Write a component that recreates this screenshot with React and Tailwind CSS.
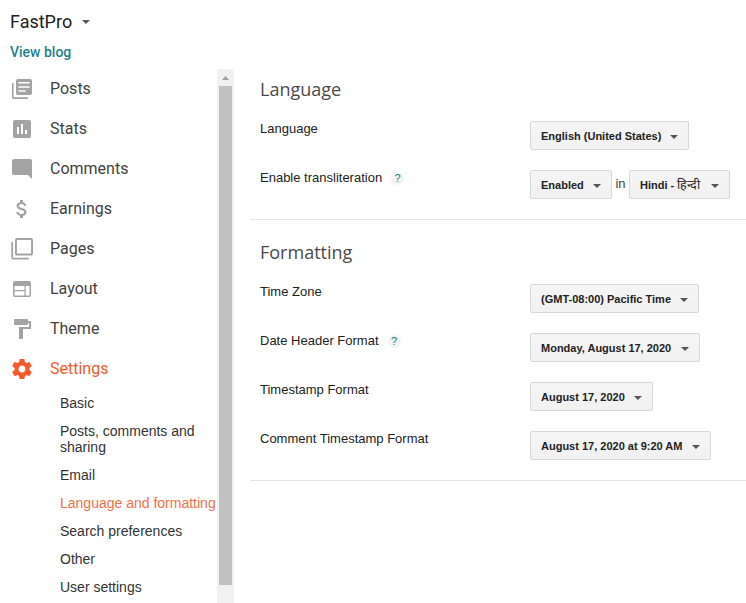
import React from "react";

function Icon({ children, active }) {
  return (
    <svg
      width="24"
      height="24"
      viewBox="0 0 24 24"
      className={active ? "shrink-0 fill-[#f4592a]" : "shrink-0 fill-[#a3a3a3]"}
    >
      {children}
    </svg>
  );
}

const icons = {
  posts: (
    <>
      <path d="M2 6h1.6v14.2H18V22H3.5Q2 22 2 20.5Z" />
      <path
        fillRule="evenodd"
        d="M8 2h12q2 0 2 2v12q0 2-2 2H8q-2 0-2-2V4q0-2 2-2ZM8.3 5v1.5h11.4V5ZM8.3 9.2v1.5h11.4V9.2ZM8.3 13.2v1.5h7.4v-1.5Z"
      />
    </>
  ),
  stats: (
    <path
      fillRule="evenodd"
      d="M5 3h14q2 0 2 2v14q0 2-2 2H5q-2 0-2-2V5q0-2 2-2ZM7 10v7h2v-7ZM11 7v10h2V7ZM15 13v4h2v-4Z"
    />
  ),
  comments: <path d="M4 2h16q2 0 2 2v18l-4-4H4q-2 0-2-2V4q0-2 2-2Z" />,
  earnings: (
    <path d="M11.8 10.9c-2.27-.59-3-1.2-3-2.15 0-1.09 1.01-1.85 2.7-1.85 1.78 0 2.44.85 2.5 2.1h2.21c-.07-1.72-1.12-3.3-3.21-3.81V3h-3v2.16c-1.94.42-3.5 1.68-3.5 3.61 0 2.31 1.91 3.46 4.7 4.13 2.5.6 3 1.48 3 2.41 0 .69-.49 1.79-2.7 1.79-2.06 0-2.87-.92-2.98-2.1h-2.2c.12 2.19 1.76 3.42 3.68 3.83V21h3v-2.15c1.95-.37 3.5-1.5 3.5-3.55 0-2.84-2.43-3.81-4.7-4.4z" />
  ),
  pages: (
    <>
      <path d="M1.3 5H3v15.7h15.8v1.9H2.8q-1.5 0-1.5-1.5Z" />
      <path
        fillRule="evenodd"
        d="M7 1h14q2 0 2 2v13.500q0 2-2 2H7q-2 0-2-2V3q0-2 2-2ZM6.900 2.900v13.700h14.200V2.900Z"
      />
    </>
  ),
  layout: (
    <path
      fillRule="evenodd"
      d="M5 4h14q2 0 2 2v12q0 2-2 2H5q-2 0-2-2V6q0-2 2-2ZM4.500 9v4h10V9ZM4.500 14.200v4.300h10v-4.300ZM15.700 9v9.500h3.800V9Z"
    />
  ),
  theme: (
    <path d="M18 4V3c0-.55-.45-1-1-1H5c-.55 0-1 .45-1 1v4c0 .55.45 1 1 1h12c.55 0 1-.45 1-1V6h1v4H9v11c0 .55.45 1 1 1h2c.55 0 1-.45 1-1v-9h8V4h-3z" />
  ),
  settings: (
    <path d="M19.430 12.980c.040-.320.070-.640.070-.980s-.030-.660-.070-.980l2.110-1.650c.190-.150.240-.420.120-.640l-2-3.460c-.120-.220-.390-.300-.610-.220l-2.490 1c-.520-.400-1.080-.730-1.690-.980l-.380-2.650C14.460 2.180 14.250 2 14 2h-4c-.250 0-.460.180-.490.420l-.380 2.650c-.610.250-1.170.590-1.690.980l-2.490-1c-.230-.090-.490 0-.610.220l-2 3.460c-.130.220-.070.490.120.640l2.110 1.650c-.040.320-.070.650-.070.980s.030.660.070.980l-2.110 1.650c-.190.150-.240.420-.120.640l2 3.460c.120.220.390.300.610.220l2.490-1c.520.400 1.080.730 1.690.980l.380 2.650c.030.240.240.420.490.420h4c.250 0 .460-.180.490-.420l.380-2.650c.610-.250 1.170-.590 1.690-.980l2.490 1c.230.090.490 0 .610-.220l2-3.460c.120-.220.070-.490-.120-.640l-2.110-1.650zM12 15.500c-1.930 0-3.500-1.570-3.500-3.500s1.570-3.500 3.500-3.500 3.500 1.570 3.500 3.500-1.570 3.500-3.500 3.500z" />
  ),
};

const nav = [
  ["posts", "Posts"],
  ["stats", "Stats"],
  ["comments", "Comments"],
  ["earnings", "Earnings"],
  ["pages", "Pages"],
  ["layout", "Layout"],
  ["theme", "Theme"],
  ["settings", "Settings"],
];

const subnav = [
  "Basic",
  "Posts, comments and sharing",
  "Email",
  "Language and formatting",
  "Search preferences",
  "Other",
  "User settings",
];

function Caret() {
  return (
    <svg width="8" height="4" viewBox="0 0 8 4" className="shrink-0 fill-[#555]">
      <path d="M0 0h8L4 4Z" />
    </svg>
  );
}

function Select({ children, width }) {
  return (
    <button
      className={`${width} flex h-[29px] shrink-0 items-center justify-between rounded-[2px] border border-[#d8d8d8] bg-linear-to-b from-[#f5f5f5] to-[#f1f1f1] px-[10px] text-[11px] leading-[16px] font-bold whitespace-nowrap text-[#222]`}
    >
      <span className="h-[17px] pt-px">{children}</span>
      <span className="flex pt-[3px]">
        <Caret />
      </span>
    </button>
  );
}

function Row({ label, help, children }) {
  return (
    <div className="flex h-[49px] items-start pl-[10px]">
      <div className="flex w-[270px] shrink-0 items-center text-[13px] leading-[16px] text-[#222]">
        {label}
        {help && (
          <span className="ml-[9px] flex h-[13px] w-[13px] items-center justify-center rounded-full bg-[#f3f3f3] text-[11px] leading-none text-[#1a7f8e]">
            ?
          </span>
        )}
      </div>
      {children}
    </div>
  );
}

function Title({ children }) {
  return (
    <h2 className="h-[45px] pl-[10px] font-['Open_Sans',sans-serif] text-[18px] leading-[26px] font-normal text-[#4a4a4a]">
      {children}
    </h2>
  );
}

export default function App() {
  return (
    <div className="flex h-[603px] w-[746px] flex-col overflow-hidden bg-white font-['Liberation_Sans',Arial,sans-serif]">
      <header className="h-[69px] shrink-0 pl-[10px] font-['Roboto',sans-serif]">
        <div className="flex items-center pt-[10px] text-[18px] leading-[24px] text-[#212121]">
          <span className="w-[71.5px] whitespace-nowrap">FastPro</span>
          <Caret />
        </div>
        <a className="block pt-[9px] text-[14px] leading-[18px] font-medium text-[#1f7f8f]">View blog</a>
      </header>

      <div className="flex min-h-0 flex-1">
        <nav className="w-[217px] shrink-0 overflow-hidden">
          <ul className="font-['Roboto',sans-serif]">
            {nav.map(([key, label]) => (
              <li key={key} className="flex h-[40px] items-center pl-[10px]">
                <Icon active={key === "settings"}>{icons[key]}</Icon>
                <span
                  className={
                    key === "settings"
                      ? "pl-[16px] text-[16px] leading-[20px] text-[#f4592a]"
                      : "pl-[16px] text-[16px] leading-[20px] text-[#424242]"
                  }
                >
                  {label}
                </span>
              </li>
            ))}
          </ul>
          <ul className="flex flex-col gap-[12px] pt-[6px] pl-[60px] text-[14px] leading-[16px] text-[#333]">
            {subnav.map((label) => (
              <li
                key={label}
                className={label === "Language and formatting" ? "whitespace-nowrap text-[#f4704a]" : ""}
              >
                {label}
              </li>
            ))}
          </ul>
        </nav>

        <div className="flex w-[17px] shrink-0 flex-col items-center bg-[#f1f1f1]">
          <div className="flex h-[17px] items-center">
            <svg width="7" height="4" viewBox="0 0 7 4" className="fill-[#a0a0a0]">
              <path d="M0 4h7L3.500 0Z" />
            </svg>
          </div>
          <div className="h-[499px] w-[13px] bg-[#c1c1c1]" />
        </div>

        <main className="min-w-0 flex-1 pl-[16px]">
          <section className="h-[151px] border-b border-[#e5e5e5] pt-[7px]">
            <Title>Language</Title>
            <Row label="Language">
              <Select width="w-[159px]">English (United States)</Select>
            </Row>
            <Row label="Enable transliteration" help>
              <Select width="w-[82px]">Enabled</Select>
              <span className="w-[17px] pt-[6px] text-center text-[13px] leading-[16px] text-[#444]">in</span>
              <Select width="w-[101px]">
                Hindi - <span className="text-[12.5px] leading-none font-normal">हिन्दी</span>
              </Select>
            </Row>
          </section>
          <section className="h-[261px] border-b border-[#e5e5e5] pt-[19px]">
            <Title>Formatting</Title>
            <Row label="Time Zone">
              <Select width="w-[169px]">(GMT-08:00) Pacific Time</Select>
            </Row>
            <Row label="Date Header Format" help>
              <Select width="w-[170px]">Monday, August 17, 2020</Select>
            </Row>
            <Row label="Timestamp Format">
              <Select width="w-[123px]">August 17, 2020</Select>
            </Row>
            <Row label="Comment Timestamp Format">
              <Select width="w-[181px]">August 17, 2020 at 9:20 AM</Select>
            </Row>
          </section>
        </main>
      </div>
    </div>
  );
}
